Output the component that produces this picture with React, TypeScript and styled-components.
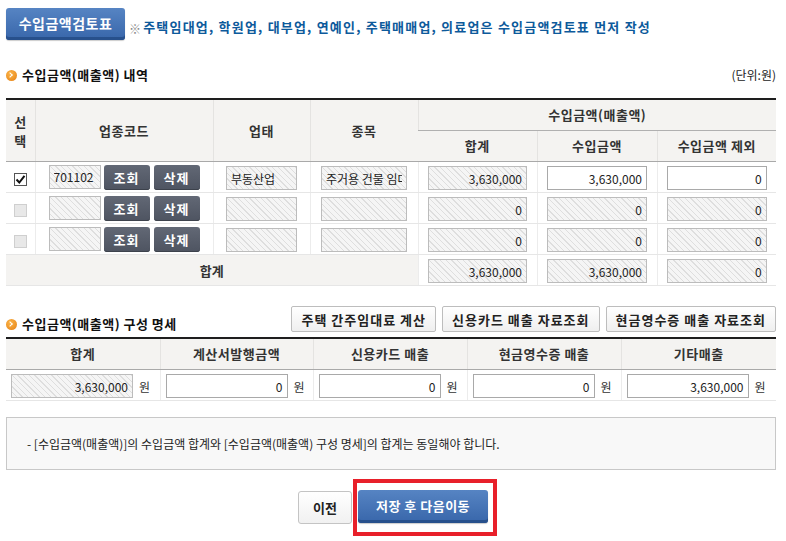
import styled, { createGlobalStyle, css } from 'styled-components';

const GlobalStyle = createGlobalStyle`
	body {
		margin: 0;
		background: #fff;
		font-family: 'Noto Sans CJK KR', 'Noto Sans', sans-serif;
		color: #333;
	}
`;

const salesRows = [
	{ checked: true, code: '701102', type: '부동산업', item: '주거용 건물 임대업', total: '3,630,000', income: '3,630,000', excluded: '0' },
	{ checked: false, code: '', type: '', item: '', total: '0', income: '0', excluded: '0' },
	{ checked: false, code: '', type: '', item: '', total: '0', income: '0', excluded: '0' },
];

const breakdown = [
	{ label: '합계', value: '3,630,000', locked: true },
	{ label: '계산서발행금액', value: '0', locked: false },
	{ label: '신용카드 매출', value: '0', locked: false },
	{ label: '현금영수증 매출', value: '0', locked: false },
	{ label: '기타매출', value: '3,630,000', locked: false },
];

const App = () => {
	return (
		<Page>
			<GlobalStyle />
			<TopBar>
				<ReviewButton>수입금액검토표</ReviewButton>
				<Notice>
					<Mark>※</Mark>주택임대업, 학원업, 대부업, 연예인, 주택매매업, 의료업은 수입금액검토표 먼저 작성
				</Notice>
			</TopBar>

			<SectionHead $top={26}>
				<SectionTitle>
					<Bullet />
					수입금액(매출액) 내역
				</SectionTitle>
				<Unit>(단위:원)</Unit>
			</SectionHead>

			<Grid>
				<colgroup>
					{[29, 178, 97, 108, 119, 120, 119].map((w, i) => (
						<Col key={i} $w={w} />
					))}
				</colgroup>
				<thead>
					<tr>
						<Th rowSpan={2} $narrow>
							<StackChar>선</StackChar>
							<StackChar>택</StackChar>
						</Th>
						<Th rowSpan={2}>업종코드</Th>
						<Th rowSpan={2}>업태</Th>
						<Th rowSpan={2}>종목</Th>
						<Th colSpan={3} $group>
							수입금액(매출액)
						</Th>
					</tr>
					<tr>
						<Th $sub>합계</Th>
						<Th $sub>수입금액</Th>
						<Th $sub>수입금액 제외</Th>
					</tr>
				</thead>
				<tbody>
					{salesRows.map((row, idx) => (
						<Row key={idx}>
							<Td>
								<Check $checked={row.checked}>
									{row.checked && (
										<svg width='11' height='11' viewBox='0 0 11 11'>
											<path d='M1.5 5.5 L4.3 8.5 L9.5 1.8' fill='none' stroke='#111' strokeWidth='2' />
										</svg>
									)}
								</Check>
							</Td>
							<Td>
								<CodeGroup>
									<Field $w={52} $locked readOnly value={row.code} />
									<DarkButton>조회</DarkButton>
									<DarkButton>삭제</DarkButton>
								</CodeGroup>
							</Td>
							<Td>
								<Field $w={71} $locked readOnly value={row.type} />
							</Td>
							<Td>
								<Field $w={86} $locked readOnly value={row.item} />
							</Td>
							<Td>
								<Field $w={99} $locked $num readOnly value={row.total} />
							</Td>
							<Td>
								<Field $w={100} $locked={!row.checked} $num readOnly value={row.income} />
							</Td>
							<Td>
								<Field $w={100} $locked={!row.checked} $num readOnly value={row.excluded} />
							</Td>
						</Row>
					))}
					<Row>
						<Td colSpan={4} $label>
							합계
						</Td>
						<Td>
							<Field $w={99} $locked $num readOnly value='3,630,000' />
						</Td>
						<Td>
							<Field $w={100} $locked $num readOnly value='3,630,000' />
						</Td>
						<Td>
							<Field $w={100} $locked $num readOnly value='0' />
						</Td>
					</Row>
				</tbody>
			</Grid>

			<SectionHead $top={20}>
				<SectionTitle $drop>
					<Bullet />
					수입금액(매출액) 구성 명세
				</SectionTitle>
				<Actions>
					<LightButton>주택 간주임대료 계산</LightButton>
					<LightButton>신용카드 매출 자료조회</LightButton>
					<LightButton>현금영수증 매출 자료조회</LightButton>
				</Actions>
			</SectionHead>

			<Grid $gap={5}>
				<colgroup>
					{[154, 153, 154, 154, 155].map((w, i) => (
						<Col key={i} $w={w} />
					))}
				</colgroup>
				<thead>
					<tr>
						{breakdown.map((b) => (
							<Th key={b.label} $sub>
								{b.label}
							</Th>
						))}
					</tr>
				</thead>
				<tbody>
					<Row>
						{breakdown.map((b) => (
							<Td key={b.label} $left>
								<Field $w={122} $locked={b.locked} $num readOnly value={b.value} />
								<Won>원</Won>
							</Td>
						))}
					</Row>
				</tbody>
			</Grid>

			<NoteBox>- [수입금액(매출액)]의 수입금액 합계와 [수입금액(매출액) 구성 명세]의 합계는 동일해야 합니다.</NoteBox>

			<Footer>
				<PrevButton>이전</PrevButton>
				<Highlight>
					<SaveButton>저장 후 다음이동</SaveButton>
				</Highlight>
			</Footer>
		</Page>
	);
};

export default App;

const Page = styled.div`
	width: 770px;
	padding: 8px 10px 0 6px;
`;

const TopBar = styled.div`
	display: flex;
	align-items: flex-end;
	gap: 4px;
`;

const blueFace = css`
	border: 0;
	border-radius: 3px;
	background: linear-gradient(#5684c3, #3866aa);
	box-shadow: inset 0 -3px 0 #27508c, 0 1px 1px rgba(0, 0, 0, 0.2);
	color: #fff;
	font-family: inherit;
	font-weight: 700;
	cursor: pointer;
`;

const ReviewButton = styled.button`
	${blueFace};
	width: 119px;
	height: 32px;
	font-size: 14px;
	letter-spacing: 0.5px;
	padding: 0 0 3px;
`;

const Notice = styled.div`
	display: flex;
	align-items: center;
	padding-bottom: 4px;
	color: #0d5a9b;
	font-size: 13px;
	font-weight: 700;
	letter-spacing: 1.2px;
	white-space: nowrap;
`;

const Mark = styled.span`
	color: #8a8a8a;
	font-weight: 400;
	font-size: 12px;
	margin-right: 1px;
	position: relative;
	top: 2px;
`;

const SectionHead = styled.div<{ $top: number }>`
	display: flex;
	justify-content: space-between;
	align-items: flex-end;
	margin-top: ${({ $top }) => $top}px;
	margin-bottom: 5px;
`;

const SectionTitle = styled.h3<{ $drop?: boolean }>`
	display: flex;
	align-items: center;
	gap: 5px;
	margin: 0 0 ${({ $drop }) => ($drop ? 0 : 10)}px;
	font-size: 13px;
	font-weight: 700;
	letter-spacing: 0.5px;
	color: #111;
	line-height: 16px;
`;

const Bullet = styled.span`
	position: relative;
	width: 11px;
	height: 11px;
	border-radius: 50%;
	background: radial-gradient(circle at 40% 35%, #fbb54a, #e57f12);
	&::after {
		content: '';
		position: absolute;
		left: 2px;
		top: 3px;
		width: 3px;
		height: 3px;
		border-top: 1.5px solid #fff;
		border-right: 1.5px solid #fff;
		transform: rotate(45deg);
	}
`;

const Unit = styled.span`
	font-size: 12px;
	color: #222;
	margin-bottom: 10px;
`;

const Grid = styled.table<{ $gap?: number }>`
	width: 770px;
	table-layout: fixed;
	border-collapse: collapse;
	border-top: 2px solid #1e1e1e;
	margin-top: ${({ $gap }) => $gap ?? 0}px;
`;

const Col = styled.col<{ $w: number }>`
	width: ${({ $w }) => $w}px;
`;

const Th = styled.th<{ $narrow?: boolean; $group?: boolean; $sub?: boolean }>`
	background: #f4f3f1;
	font-size: 13px;
	font-weight: 700;
	color: #333;
	height: 30px;
	padding: 0;
	border-left: 1px solid #e4e3e1;
	border-bottom: 1px solid #a9a9a9;
	line-height: 18px;
	letter-spacing: ${({ $narrow }) => ($narrow ? 0 : 0.5)}px;
	&:first-child {
		border-left: 0;
	}
	${({ $group }) =>
		$group &&
		css`
			border-bottom: 1px solid #b0b0b0;
		`}
	${({ $sub }) =>
		$sub &&
		css`
			border-left: 1px solid #e4e3e1;
		`}
`;

const StackChar = styled.span`
	display: block;
	font-size: 13px;
	line-height: 19px;
`;

const Row = styled.tr`
	height: 31px;
`;

const Td = styled.td<{ $label?: boolean; $left?: boolean }>`
	padding: 0;
	text-align: center;
	border-bottom: 1px solid #e6e6e6;
	border-left: 1px solid #ececec;
	vertical-align: middle;
	&:first-child {
		border-left: 0;
	}
	${({ $label }) =>
		$label &&
		css`
			background: #f4f3f1;
			font-size: 13px;
			font-weight: 700;
			color: #333;
		`}
	${({ $left }) =>
		$left &&
		css`
			text-align: left;
			padding-left: 5px;
			white-space: nowrap;
		`}
`;

const Check = styled.span<{ $checked: boolean }>`
	display: inline-flex;
	align-items: center;
	justify-content: center;
	width: 13px;
	height: 13px;
	box-sizing: border-box;
	vertical-align: middle;
	border: 1px solid ${({ $checked }) => ($checked ? '#555' : '#cfcfcf')};
	background: ${({ $checked }) => ($checked ? '#fff' : '#e8e8e8')};
`;

const CodeGroup = styled.div`
	display: flex;
	justify-content: center;
	gap: 3px;
	& > button + button {
		margin-left: 1px;
	}
`;

const Field = styled.input<{ $w: number; $locked?: boolean; $num?: boolean }>`
	width: ${({ $w }) => $w}px;
	height: 24px;
	box-sizing: border-box;
	vertical-align: middle;
	border: 1px solid ${({ $locked }) => ($locked ? '#bcbcbc' : '#a9a9a9')};
	padding: 0 4px;
	font-family: inherit;
	font-size: 12px;
	color: #222;
	text-align: ${({ $num }) => ($num ? 'right' : 'left')};
	outline: none;
	background: ${({ $locked }) =>
		$locked ? 'repeating-linear-gradient(45deg, #f5f5f5 0 3px, #dedede 3px 4px)' : '#fff'};
`;

const DarkButton = styled.button`
	width: 46px;
	height: 25px;
	border: 0;
	border-radius: 3px;
	background: linear-gradient(#626875, #4e5461);
	box-shadow: inset 0 -1px 0 #3d424c;
	color: #fff;
	font-family: inherit;
	font-size: 13px;
	font-weight: 700;
	letter-spacing: 1px;
	padding: 0;
`;

const Actions = styled.div`
	display: flex;
	gap: 6px;
	margin-bottom: 0;
`;

const LightButton = styled.button`
	height: 26px;
	padding: 0 9px;
	border: 1px solid #bdbdbd;
	border-radius: 2px;
	background: linear-gradient(#ffffff, #efefef);
	color: #222;
	font-family: inherit;
	font-size: 13px;
	font-weight: 700;
	letter-spacing: 1px;
`;

const Won = styled.span`
	font-size: 12px;
	color: #333;
	margin-left: 6px;
	vertical-align: middle;
`;

const NoteBox = styled.div`
	margin-top: 16px;
	height: 53px;
	box-sizing: border-box;
	display: flex;
	align-items: center;
	padding-left: 20px;
	background: #f8f8f8;
	border: 1px solid #c8c8c8;
	font-size: 12px;
	color: #222;
`;

const Footer = styled.div`
	display: flex;
	justify-content: center;
	align-items: center;
	margin-top: 9px;
	padding-left: 13px;
`;

const PrevButton = styled.button`
	width: 54px;
	height: 33px;
	border: 1px solid #c4c4c4;
	border-radius: 3px;
	background: linear-gradient(#ffffff, #f1f1f1);
	font-family: inherit;
	font-size: 13px;
	font-weight: 700;
	color: #222;
	padding: 0;
`;

const Highlight = styled.div`
	border: 4px solid #e8202a;
	padding: 7px 5px 9px 1px;
	margin-left: 1px;
`;

const SaveButton = styled.button`
	${blueFace};
	width: 130px;
	height: 33px;
	font-size: 13px;
	letter-spacing: 0.5px;
	padding: 0 0 3px;
`;
